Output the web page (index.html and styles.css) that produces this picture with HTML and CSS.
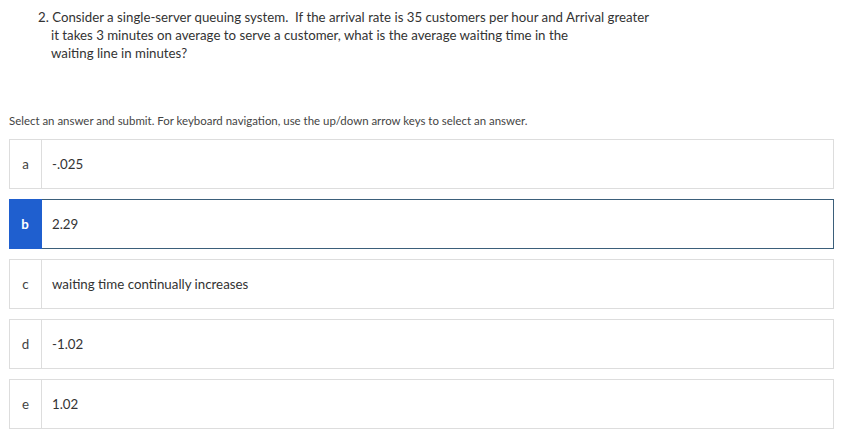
FILE: index.html
```html
<!DOCTYPE html>
<html>
<head>
<meta charset="utf-8">
<link rel="stylesheet" href="styles.css">
</head>
<body>
<div class="question">
  <p class="q-text">2. Consider a single-server queuing system.&nbsp; If the arrival rate is 35 customers per hour and Arrival greater<br>it takes 3 minutes on average to serve a customer, what is the average waiting time in the<br>waiting line in minutes?</p>
</div>
<p class="instructions">Select an answer and submit. For keyboard navigation, use the up/down arrow keys to select an answer.</p>
<div class="options">
  <div class="option"><span class="letter">a</span><span class="label">-.025</span></div>
  <div class="option selected"><span class="letter">b</span><span class="label">2.29</span></div>
  <div class="option"><span class="letter">c</span><span class="label">waiting time continually increases</span></div>
  <div class="option"><span class="letter">d</span><span class="label">-1.02</span></div>
  <div class="option"><span class="letter">e</span><span class="label">1.02</span></div>
</div>
</body>
</html>
```
FILE: styles.css
```css
html, body {
  margin: 0;
  padding: 0;
  background: #ffffff;
}
body {
  font-family: Lato, "Liberation Sans", sans-serif;
  color: #333333;
}
.question {
  padding: 8px 0 0 51px;
}
.q-text {
  margin: 0;
  font-size: 13.25px;
  line-height: 18px;
  text-indent: -13px;
  color: #333333;
  white-space: nowrap;
}
.instructions {
  margin: 52px 0 0 9px;
  font-size: 11.45px;
  line-height: 14px;
  color: #444444;
}
.options {
  margin: 11px 15px 0 9px;
  display: flex;
  flex-direction: column;
  gap: 10px;
}
.option {
  display: flex;
  align-items: stretch;
  height: 50px;
  box-sizing: border-box;
  border: 1px solid #dddddd;
  font-size: 13.3px;
  color: #333333;
}
.letter {
  width: 31px;
  flex: none;
  display: flex;
  align-items: center;
  justify-content: center;
  border-right: 1px solid #dddddd;
  color: #444444;
}
.label {
  display: flex;
  align-items: center;
  padding-left: 10px;
}
.option.selected {
  border-color: #3b5f7a;
}
.option.selected .letter {
  background: #1f5fcf;
  color: #ffffff;
  font-weight: bold;
  border-right-color: #1f5fcf;
  margin: -1px 0 -1px -1px;
  width: 32px;
}
```
